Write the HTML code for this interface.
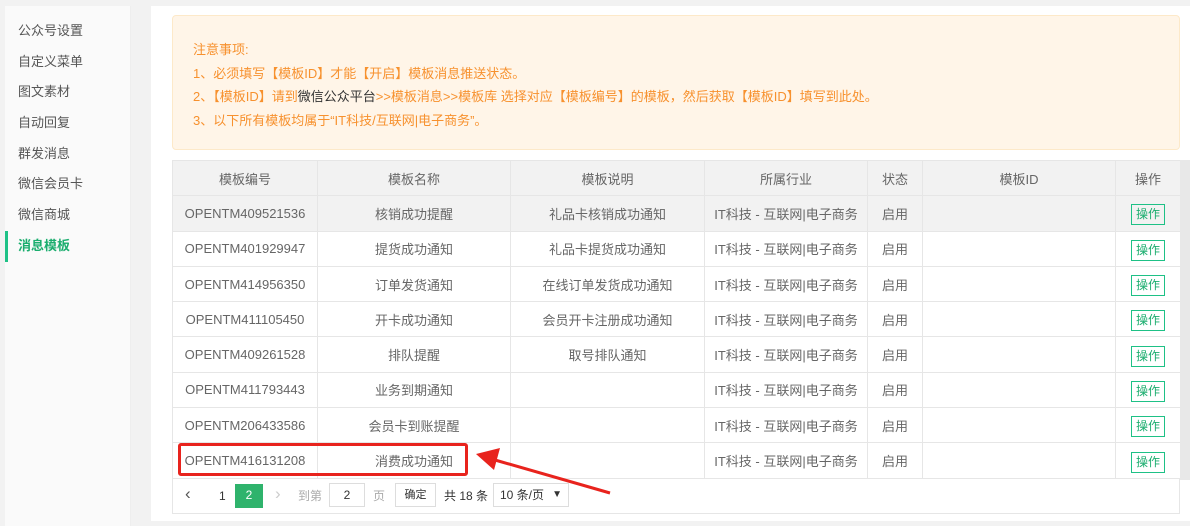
<!DOCTYPE html>
<html><head><meta charset="utf-8"><style>
*{margin:0;padding:0;box-sizing:border-box}
body{width:1190px;height:521px;background:#f2f2f2;font-family:"Liberation Sans","Noto Sans CJK SC",sans-serif;font-size:13px;color:#666;position:relative;overflow:hidden}
.side{position:absolute;left:5px;top:6px;width:126px;height:520px;background:#fafafa;border-right:1px solid #eee}
.side div{height:30.7px;line-height:30.7px;padding-left:13px;color:#555}
.side .on{color:#1aad6e;font-weight:bold;border-left:3px solid #1ec186;padding-left:10px}
.main{position:absolute;left:151px;top:6px;width:1039px;height:515px;background:#fff}
.note{position:absolute;left:172px;top:15px;width:1008px;height:135px;background:#fff5e8;border:1px solid #fde9c9;border-radius:4px;color:#f7912e;padding:22px 0 0 20px;line-height:23.5px;font-size:13px}
table{position:absolute;left:172px;top:160px;border-collapse:collapse;font-size:13px}
td,th{border:1px solid #e6e6e6;text-align:center;height:35.3px;font-weight:normal;color:#666;padding:0}
th{background:#f2f2f2}
tr.g td{background:#f2f2f2}
.op{display:inline-block;border:1px solid #1ec186;color:#1aad6e;font-size:12px;padding:2px 4px;line-height:15px;margin-top:3px}
.pg{position:absolute;left:172px;top:478px;width:1008px;height:36px;border:1px solid #e6e6e6;border-top:none;font-size:12px}
.pg span{position:absolute;top:7px;line-height:22px}
.box{position:absolute;border:1px solid #ddd;height:24px;top:5px;text-align:center;line-height:22px;color:#333}
</style></head><body>
<div class="side"><div style="margin-top:10px">公众号设置</div><div>自定义菜单</div><div>图文素材</div><div>自动回复</div><div>群发消息</div><div>微信会员卡</div><div>微信商城</div><div class="on">消息模板</div></div>
<div class="main"></div>
<div class="note">注意事项:<br>1、必须填写【模板ID】才能【开启】模板消息推送状态。<br>2、【模板ID】请到<span style="color:#333">微信公众平台</span>&gt;&gt;模板消息&gt;&gt;模板库 选择对应【模板编号】的模板，然后获取【模板ID】填写到此处。<br>3、以下所有模板均属于“IT科技/互联网|电子商务”。</div>
<table>
<tr><th style="width:145px">模板编号</th><th style="width:193px">模板名称</th><th style="width:194px">模板说明</th><th style="width:163px">所属行业</th><th style="width:55px">状态</th><th style="width:193px">模板ID</th><th style="width:65px">操作</th></tr>
<tr class="g"><td>OPENTM409521536</td><td>核销成功提醒</td><td>礼品卡核销成功通知</td><td>IT科技 - 互联网|电子商务</td><td>启用</td><td></td><td><span class="op">操作</span></td></tr>
<tr><td>OPENTM401929947</td><td>提货成功通知</td><td>礼品卡提货成功通知</td><td>IT科技 - 互联网|电子商务</td><td>启用</td><td></td><td><span class="op">操作</span></td></tr>
<tr><td>OPENTM414956350</td><td>订单发货通知</td><td>在线订单发货成功通知</td><td>IT科技 - 互联网|电子商务</td><td>启用</td><td></td><td><span class="op">操作</span></td></tr>
<tr><td>OPENTM411105450</td><td>开卡成功通知</td><td>会员开卡注册成功通知</td><td>IT科技 - 互联网|电子商务</td><td>启用</td><td></td><td><span class="op">操作</span></td></tr>
<tr><td>OPENTM409261528</td><td>排队提醒</td><td>取号排队通知</td><td>IT科技 - 互联网|电子商务</td><td>启用</td><td></td><td><span class="op">操作</span></td></tr>
<tr><td>OPENTM411793443</td><td>业务到期通知</td><td></td><td>IT科技 - 互联网|电子商务</td><td>启用</td><td></td><td><span class="op">操作</span></td></tr>
<tr><td>OPENTM206433586</td><td>会员卡到账提醒</td><td></td><td>IT科技 - 互联网|电子商务</td><td>启用</td><td></td><td><span class="op">操作</span></td></tr>
<tr><td>OPENTM416131208</td><td>消费成功通知</td><td></td><td>IT科技 - 互联网|电子商务</td><td>启用</td><td></td><td><span class="op">操作</span></td></tr>
</table>
<div style="position:absolute;left:1180px;top:160px;width:10px;height:320px;background:#e8e8e8"></div>
<div class="pg">
<span style="left:12px;font-size:17px;top:5px;color:#555">‹</span>
<span style="left:46px;color:#333">1</span>
<span style="left:62px;top:6px;width:28px;height:24px;background:#2fb36c;color:#fff;text-align:center">2</span>
<span style="left:102px;color:#ccc;font-size:17px;top:5px">›</span>
<span style="left:125px;color:#aaa">到第</span>
<div class="box" style="left:156px;width:36px">2</div>
<span style="left:200px;color:#aaa">页</span>
<div class="box" style="left:222px;width:41px;font-size:11px">确定</div>
<span style="left:271px;color:#333">共 18 条</span>
<div class="box" style="left:320px;width:76px;text-align:left;padding-left:6px">10 条/页 <span style="position:static;float:right;margin-right:6px;font-size:10px">▼</span></div>
</div>
<div style="position:absolute;left:178px;top:443px;width:290px;height:33px;border:3px solid #e8231d;border-radius:3px"></div>
<svg style="position:absolute;left:0;top:0" width="1190" height="521"><line x1="610" y1="493" x2="495" y2="460" stroke="#e8231d" stroke-width="3"/><polygon points="476,454 500,448 494,470" fill="#e8231d"/></svg>
</body></html>
